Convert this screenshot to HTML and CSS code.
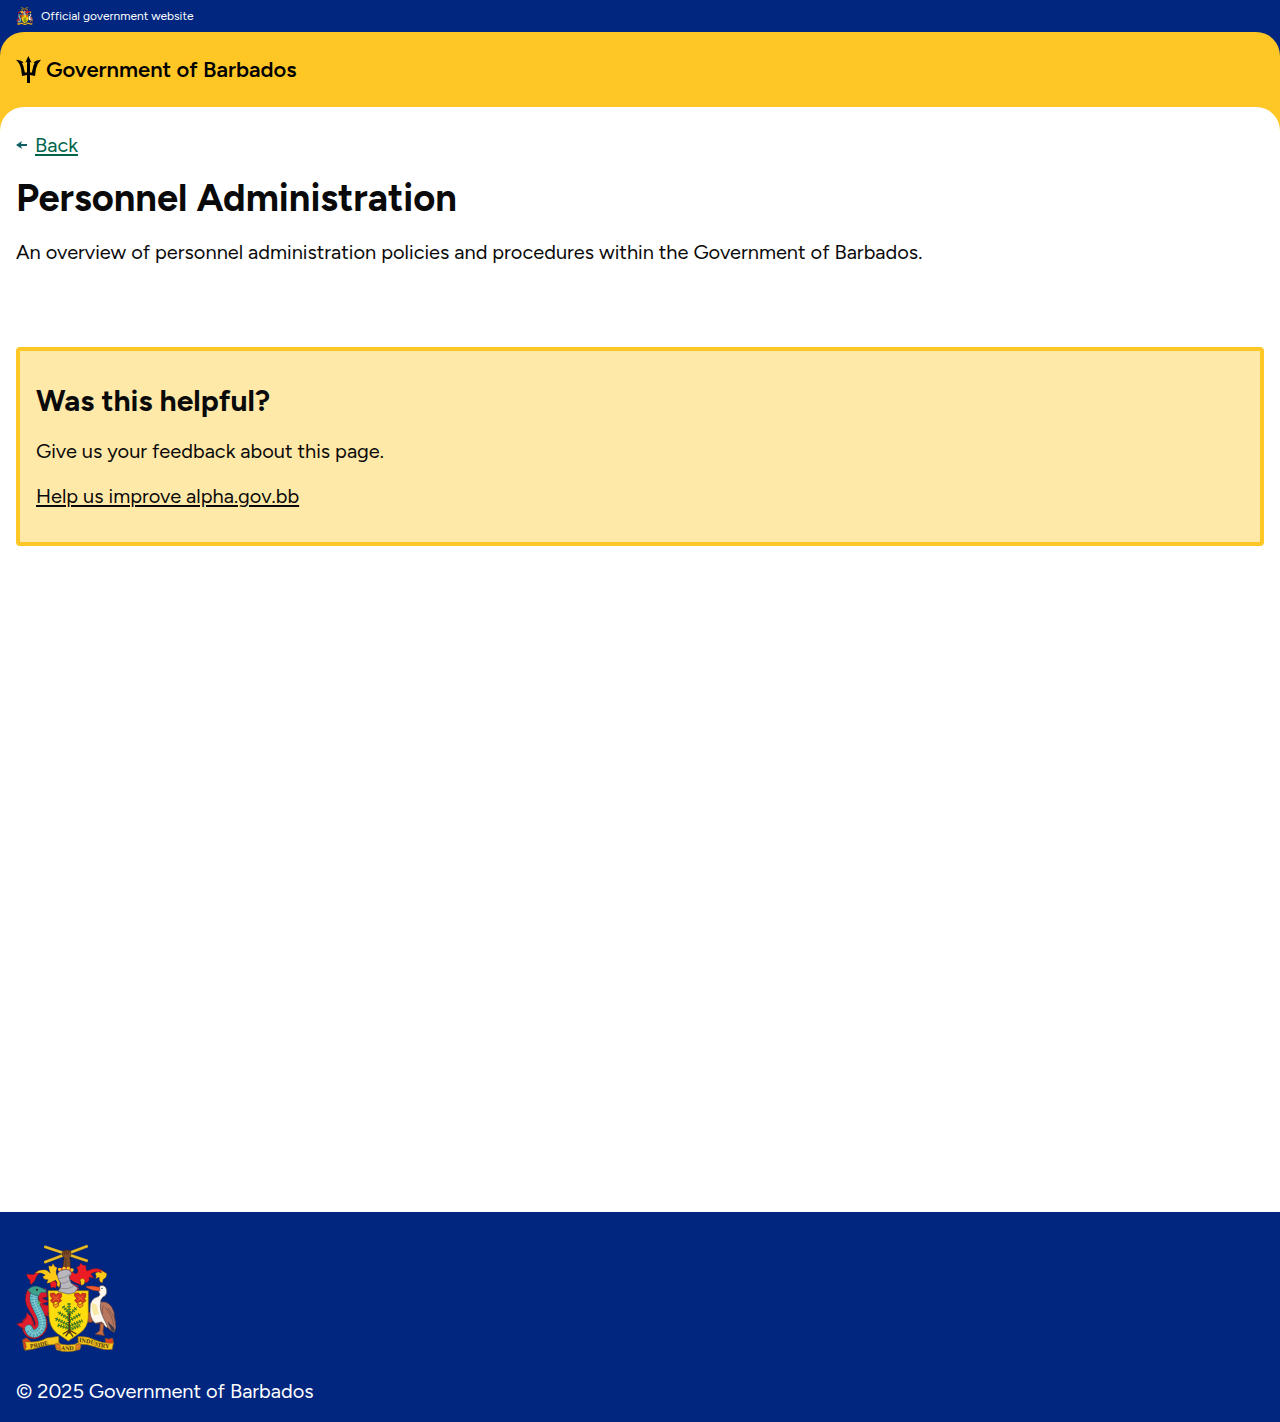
FILE: index.html
```html
<!DOCTYPE html>
<html lang="en">
<head>
<meta charset="utf-8">
<meta name="viewport" content="width=device-width, initial-scale=1">
<title>Personnel Administration</title>
<link rel="stylesheet" href="styles.css">
</head>
<body>
<svg class="defs" aria-hidden="true">
  <symbol id="coat" viewBox="48 132 300 324">
    <!-- crossed sugar canes and arm -->
    <path d="M133 140 263 183M133 187 263 138" stroke="#8a6a1c" stroke-width="9"/>
    <path d="M133 140 263 183M133 187 263 138" stroke="#e6bd28" stroke-width="7"/>
    <path d="M187 156q5-7 12-6 10-1 13 4 3 9-2 17l2 34h-24l4-32q-8-8-5-17z" fill="#7c4a26" stroke="#2c1a12" stroke-width="1.5"/>
    <path d="M193 152v12M199 151v12M205 152v12M198 175l-2 26" stroke="#3f2415" stroke-width="1.5" fill="none"/>
    <!-- mantling -->
    <g stroke="#3b1b22" stroke-width="1">
      <path d="M80 222 100 224Q108 211 126 209L146 217Q122 211 110 229L104 242 94 254Q88 250 90 240 80 234 80 222z" fill="#ed1c24"/>
      <path d="M105 220Q116 207 139 210L151 219Q145 206 146 197L155 199 159 190 164 199 172 203Q166 214 170 225L180 235Q182 251 178 263L170 256Q174 246 166 240 157 250 140 250L144 239Q130 240 128 230L136 225Q121 215 105 220z" fill="#ffc917"/>
      <path d="M150 250Q160 240 168 245 173 254 166 265L160 262 153 264z" fill="#ed1c24"/>
      <path d="M320 220 303 209Q285 201 262 213 255 206 259 197L248 195 242 188 238 198 229 202Q239 214 228 222L211 213 208 237Q222 248 245 256L240 243Q244 237 258 249 271 244 267 232L282 235Q276 225 272 222 290 211 306 220z" fill="#ed1c24"/>
      <path d="M285 222Q292 211 304 219L303 210 310 215 320 220Q322 233 310 238L307 249Q295 246 298 232L286 236Q292 228 285 222z" fill="#ffc917"/>
      <path d="M240 239Q247 232 255 240L253 252 244 257z" fill="#ffc917"/>
    </g>
    <path d="M173 206Q199 196 219 208L216 216Q196 207 176 215z" fill="#e41f27"/>
    <g fill="#ffc917"><circle cx="179" cy="208" r="5"/><circle cx="192" cy="205" r="5"/><circle cx="205" cy="205" r="5"/><circle cx="216" cy="210" r="5"/></g>
    <!-- dolphin -->
    <g fill="none" stroke-linecap="round">
      <path d="M98 280C83 313 119 332 124 368C127 397 92 410 85 383L84 370" stroke="#5b1c33" stroke-width="38"/>
      <path d="M98 280C83 313 119 332 124 368C127 397 92 410 85 383L84 370" stroke="#d91b2d" stroke-width="35"/>
    </g>
    <path d="M80 338 94 350 101 372 84 387Q62 387 50 371L69 367Q80 358 80 338z" fill="#e21b2d" stroke="#5b1c33" stroke-width="2"/>
    <path d="M112 284 137 264 142 290 127 295 146 304 126 312 149 318 145 326 153 333 143 339 147 349 129 345z" fill="#d8172b" stroke="#701b2b" stroke-width="2"/>
    <g fill="none" stroke-linecap="round">
      <path d="M104 282C92 309 123 332 127 366C130 398 94 414 86 386" stroke="#2d6270" stroke-width="25"/>
      <path d="M104 282C92 309 123 332 127 366C130 398 94 414 86 386" stroke="#6fc2cd" stroke-width="22"/>
      <path d="M104 282C92 309 123 332 127 366C130 398 94 414 86 386" stroke="#3a899c" stroke-width="20" stroke-dasharray="2 6" stroke-linecap="butt"/>
      <path d="M104 282C92 309 123 332 127 366C130 398 94 414 86 386" stroke="#8ed0d4" stroke-width="3"/>
    </g>
    <path d="M83 270Q98 254 117 260L139 270 137 278 124 277 116 288Q96 286 83 270z" fill="#3ba18b" stroke="#28526c" stroke-width="2"/>
    <path d="M116 282 133 277 127 288z" fill="#e21b2d"/>
    <circle cx="111" cy="269" r="3" fill="#222"/>
    <path d="M113 300 122 307 118 318z" fill="#57a744"/>
    <!-- pelican -->
    <path d="M270 336Q258 335 259 343L266 349 257 360 268 368 284 364 289 372 312 367 299 350 284 353z" fill="#b85a38" stroke="#582c2c" stroke-width="2"/>
    <path d="M300 306Q330 300 342 335L348 382 343 398Q319 385 309 364 298 341 300 306z" fill="#b87860" stroke="#50373c" stroke-width="2"/>
    <path d="M299 258Q316 252 320 270 323 286 308 292 300 300 302 310 298 327 309 351L321 376Q325 389 314 378L305 366 285 370Q268 353 270 326 268 296 296 289 303 283 296 276z" fill="#fff7eb" stroke="#514a50" stroke-width="2"/>
    <path d="M276 309q-2 17 7 38 8-8 15-4-7-19-8-29z" fill="#f7e7a0"/>
    <path d="M258 259 278 258 299 262 300 273Q278 274 258 262z" fill="#f15b2c" stroke="#8a3423"/>
    <circle cx="306" cy="265" r="2" fill="#222"/>
    <path d="M311 317q-8 9-2 25m6-20q24 26 26 55m-17-52q19 20 23 42" fill="none" stroke="#71463f" stroke-width="2"/>
    <path d="M322 364 342 383 345 398 333 388z" fill="#39394a"/>
    <path d="M301 368 299 392 285 403 302 405 313 407 309 394 312 372z" fill="#c26a41" stroke="#703b30" stroke-width="2"/>
    <!-- shield and helmet -->
    <path d="M144 272H265V350Q264 382 240 399L205 423 171 400Q149 383 147 350z" fill="#ffdc0b" stroke="#946c14" stroke-width="2"/>
    <path d="M172 225Q175 211 193 209 211 206 215 222L207 230 213 249 234 264Q228 281 204 282L174 274 181 263Q185 248 175 237z" fill="#b9b9bd" stroke="#58545d" stroke-width="2"/>
    <path d="M177 236Q194 236 211 222M181 250Q197 252 210 240M180 264Q202 271 223 257" fill="none" stroke="#77757e" stroke-width="2"/>
    <path d="M213 249 234 257 237 267 226 274 236 263z" fill="#d41b2c"/>
    <!-- flowers -->
    <g id="flower" fill="#d93523" stroke="#922b1a" stroke-width="2">
      <path d="M151 280l12-1 5 6 6-6 11 2-1 11-5 3 6 7-8 6-9-4-10 5-7-7 6-7-6-7z"/>
      <path d="M160 310l7 4 8-5 1 8-9 6-7-5z" fill="#f7a519"/>
      <path d="M159 288l18 14M176 288l-17 15" stroke="#f38b25"/>
    </g>
    <use href="#flower" x="73"/>
    <!-- bearded fig tree -->
    <path d="M207 310 208 401M208 340 188 318M208 345 230 322M208 358 174 336M208 362 242 342M208 376 165 355M208 378 247 362M208 386 173 375M208 390 240 376" fill="none" stroke="#4e5a1a" stroke-width="3"/>
    <path d="M207 310V390M208 340 188 318M208 345 230 322M208 358 174 336M208 362 242 342M208 376 165 355M208 378 247 362M208 386 173 375M208 390 240 376" fill="none" stroke="#3e8227" stroke-width="11" stroke-dasharray="4 4"/>
    <path d="M208 340V400M208 390 189 402M208 393 197 409M208 393 219 410M208 390 229 402" fill="none" stroke="#4e321a" stroke-width="4"/>
    <!-- motto ribbon -->
    <g stroke="#8d6414" stroke-width="2">
      <path d="M68 419 80 414 95 428 80 450 72 447z" fill="#e33a24"/>
      <path d="M341 429 337 414 326 418 316 415 318 430 332 444z" fill="#e33a24"/>
      <path d="M75 425Q115 430 140 414L176 409 177 434Q151 431 121 441 95 450 75 451L79 440z" fill="#f7c61c"/>
      <path d="M234 410Q262 408 285 420 312 433 340 429L337 448Q315 453 287 441 262 431 235 433z" fill="#f7c61c"/>
      <path d="M165 432 178 429 184 433 204 435 224 433 234 428 243 433 240 448Q203 462 169 449z" fill="#f7c61c"/>
      <path d="M166 432l14 2 1 17-13-8zm76 0-14 2-1 17 13-8z" fill="#ee792e"/>
    </g>
  </symbol>
</svg>

<div class="official">
  <svg class="official-coat" aria-hidden="true"><use href="#coat"/></svg>
  <span>Official government website</span>
</div>
<div class="header-wrap">
  <header class="header">
    <a class="brand" href="#">
      <svg class="trident" viewBox="48 168 75 81" aria-hidden="true">
        <path d="M85 168 95 188 90 185V217L95 218 98 207Q100 195 104 189L100 187Q110 180 123 179 112 190 108 206L105 228 90 225V249H81V225L66 228 63 206Q60 190 48 179 61 180 71 187L66 189Q70 195 72 207L75 218 81 217V185L76 188z"/>
      </svg>
      <span>Government of Barbados</span>
    </a>
  </header>
</div>
<div class="page">
  <main class="main">
    <a class="back" href="#">
      <svg class="arrow" viewBox="0 0 11 10" aria-hidden="true"><path d="M0 5 6 1 5 4H11V6H5L6 9z"/></svg>
      <span>Back</span>
    </a>
    <h1>Personnel Administration</h1>
    <p>An overview of personnel administration policies and procedures within the Government of Barbados.</p>
    <section class="feedback">
      <h2>Was this helpful?</h2>
      <p>Give us your feedback about this page.</p>
      <p><a href="#">Help us improve alpha.gov.bb</a></p>
    </section>
  </main>
</div>
<footer class="footer">
  <svg class="footer-coat" viewBox="48 132 300 324" role="img" aria-label="Coat of arms of Barbados">
    <use href="#coat" x="48" y="132" width="300" height="324"/>
    <path id="pride" d="M91 445Q125 441 168 425" fill="none"/>
    <path id="and" d="M183 450Q205 453 235 448" fill="none"/>
    <path id="industry" d="M237 426Q270 428 290 439 309 446 345 443" fill="none"/>
    <g class="motto">
      <text><textPath href="#pride">PRIDE</textPath></text>
      <text><textPath href="#and">AND</textPath></text>
      <text><textPath href="#industry">INDUSTRY</textPath></text>
    </g>
  </svg>
  <p>© 2025 Government of Barbados</p>
</footer>
</body>
</html>
```
FILE: styles.css
```css
* { box-sizing: border-box; }

body {
  margin: 0;
  min-height: 100vh;
  display: flex;
  flex-direction: column;
  background: #fff;
  color: #0a0a0a;
  font: 20px/30px Figtree, Lato, sans-serif;
}

h1, h2, p { margin: 0; }
svg { display: block; flex: none; }

.defs { position: absolute; width: 0; height: 0; }

.official {
  display: flex;
  align-items: center;
  gap: 8px;
  padding: 7px 16px;
  background: #00267f;
  color: #fff;
  font-size: 12px;
  line-height: 18px;
}
.official-coat { width: 17px; height: 18px; }

.header-wrap { background: #00267f; }
.header {
  padding: 24px 16px;
  background: #ffc726;
  border-radius: 24px 24px 0 0;
}
.brand {
  display: flex;
  width: fit-content;
  align-items: center;
  gap: 5px;
  color: #000;
  font-size: 22px;
  font-weight: 600;
  line-height: 27px;
  text-decoration: none;
}
.trident { width: 25px; height: 27px; }

.page {
  flex: 1;
  display: flex;
  background: #ffc726;
}
.main {
  flex: 1;
  padding: 23px 16px 64px;
  border-radius: 24px 24px 0 0;
  background: #fff;
}
.back {
  display: flex;
  width: fit-content;
  align-items: center;
  gap: 8px;
  color: #00654a;
  text-decoration: none;
}
.back span, .feedback a {
  text-decoration: underline;
  text-decoration-thickness: 2px;
  text-underline-offset: 2px;
}
.arrow { width: 11px; height: 10px; fill: #0e5f64; }

h1 { margin: 16px 0; font-size: 38px; line-height: 45px; }
h2 { font-size: 30px; line-height: 40px; }

.feedback {
  display: grid;
  gap: 15px;
  margin-top: 80px;
  padding: 30px 16px 31px;
  border: 4px solid #ffc726;
  border-radius: 4px;
  background: #ffe9a8;
}
.feedback a { color: inherit; }

.footer {
  display: grid;
  gap: 24px;
  padding: 32px 16px 16px;
  background: #00267f;
  color: #fff;
}
.footer-coat { width: 100px; height: 108px; }
.motto { font: 700 18px "Liberation Serif", serif; fill: #463512; }
```
